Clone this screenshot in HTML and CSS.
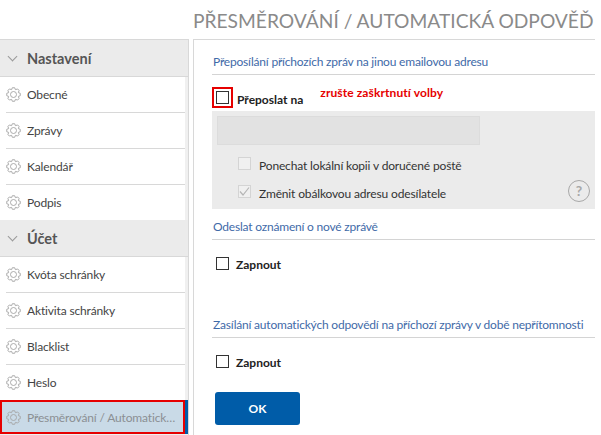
FILE: index.html
```html
<!DOCTYPE html>
<html>
  <head>
    <meta charset="utf-8">
    <link rel="stylesheet" href="styles.css">
  </head>
  <body>
    <svg class="defs" width="0" height="0">
      <symbol id="gear" viewBox="0 0 16 16">
        <path d="M6.7.8h2.6L10 2.8l2.4-.7 1.5 1.5-.7 2.4 2 .7v2.6l-2 .7.7 2.4-1.5 1.5-2.4-.7-.7 2H6.7l-.7-2-2.4.7-1.5-1.5.7-2.4-2-.7V6.7l2-.7-.7-2.4 1.5-1.5 2.4.7z" fill="none" stroke="currentColor" stroke-linejoin="round"/>
        <circle cx="8" cy="8" r="3.2" fill="none" stroke="currentColor"/>
      </symbol>
    </svg>
    <div class="page">
      <h1 class="page-title">PŘESMĚROVÁNÍ / AUTOMATICKÁ ODPOVĚĎ</h1>
      <div class="columns">
        <div class="sidebar">
          <div class="side-head"><span class="chevron"></span>Nastavení</div>
          <ul class="side-list">
            <li><svg class="gear"><use href="#gear"/></svg>Obecné</li>
            <li><svg class="gear"><use href="#gear"/></svg>Zprávy</li>
            <li><svg class="gear"><use href="#gear"/></svg>Kalendář</li>
            <li class="last"><svg class="gear"><use href="#gear"/></svg>Podpis</li>
          </ul>
          <div class="side-head"><span class="chevron"></span>Účet</div>
          <ul class="side-list">
            <li><svg class="gear"><use href="#gear"/></svg>Kvóta schránky</li>
            <li><svg class="gear"><use href="#gear"/></svg>Aktivita schránky</li>
            <li><svg class="gear"><use href="#gear"/></svg>Blacklist</li>
            <li class="last"><svg class="gear"><use href="#gear"/></svg>Heslo</li>
            <li class="active"><svg class="gear"><use href="#gear"/></svg><span class="active-text">Přesměrování / Automatická odpověď</span></li>
          </ul>
        </div>
        <div class="content">
          <h2 class="section first">Přeposílání příchozích zpráv na jinou emailovou adresu</h2>
          <div class="forward-row">
            <span class="mark"><span class="check"></span></span>
            <label class="bold-label">Přeposlat na</label>
            <span class="hint">zrušte zaškrtnutí volby</span>
          </div>
          <div class="panel">
            <div class="fake-input"></div>
            <div class="opt"><span class="check light"></span><span class="opt-text">Ponechat lokální kopii v doručené poště</span></div>
            <div class="opt">
              <span class="check light">
                <svg width="13" height="13" viewBox="0 0 13 13"><path d="M2 6.5l3 3.5 6-7.5" fill="none" stroke="#b5b5b5" stroke-width="1.2"/></svg>
              </span>
              <span class="opt-text">Změnit obálkovou adresu odesílatele</span>
              <span class="help">?</span>
            </div>
          </div>
          <h2 class="section second">Odeslat oznámení o nové zprávě</h2>
          <div class="on-row"><span class="check"></span><label class="bold-label">Zapnout</label></div>
          <h2 class="section third">Zasílání automatických odpovědí na příchozí zprávy v době nepřítomnosti</h2>
          <div class="on-row"><span class="check"></span><label class="bold-label">Zapnout</label></div>
          <button class="ok">OK</button>
        </div>
      </div>
    </div>
  </body>
</html>
```
FILE: styles.css
```css
html, body {
  margin: 0;
  padding: 0;
  height: 100%;
  overflow: hidden;
  background: #fff;
  font-family: Lato, sans-serif;
  font-size: 12px;
  color: #333;
}

.defs {
  display: block;
  height: 0;
}

.page {
  width: 601px;
  height: 435px;
  overflow: hidden;
}

.page-title {
  margin: 0;
  height: 39px;
  padding-top: 8px;
  box-sizing: border-box;
  padding-left: 193px;
  font-size: 19.2px;
  line-height: 26px;
  font-weight: 400;
  color: #8a8a8a;
  white-space: nowrap;
}

.columns {
  display: flex;
  height: 396px;
}

.sidebar {
  width: 189px;
  flex: none;
  box-sizing: border-box;
  border-right: 1px solid #d8d8d8;
  border-top: 1px solid #d8d8d8;
  margin-right: 4px;
  background: #f0f0f0;
}

.side-head {
  height: 36px;
  display: flex;
  align-items: center;
  background: #ebebeb;
  border-bottom: 1px solid #d8d8d8;
  font-size: 14.5px;
  font-weight: 700;
  color: #555;
  padding-left: 8px;
}

.chevron {
  width: 6px;
  height: 6px;
  margin: -3px 11px 0 1px;
  border-right: 1px solid #999;
  border-bottom: 1px solid #999;
  transform: rotate(45deg);
}

.side-list {
  list-style: none;
  margin: 0 3px 0 0;
  padding: 0;
  background: #fff;
}

.side-list li {
  height: 35px;
  margin-left: 6px;
  display: flex;
  align-items: center;
  border-bottom: 1px solid #d8d8d8;
  color: #444;
  font-size: 12px;
  letter-spacing: -0.15px;
}

.side-list li.last {
  border-bottom: none;
}

.gear {
  width: 15px;
  height: 15px;
  margin-right: 6px;
  color: #a5a5a5;
  flex: none;
}

.side-list li.active {
  height: 30px;
  margin: 0 -3px 0 0;
  padding: 2px 0 2px 6px;
  background: #c9dae7;
  box-shadow: inset 0 0 0 2px #e60000;
  border-bottom: none;
  border-right: 3px solid #005ca8;
  color: #8b8f93;
}

.active-text {
  width: 153px;
  overflow: hidden;
  text-overflow: ellipsis;
  white-space: nowrap;
}

.content {
  flex: 1;
  margin-right: 6px;
  border-left: 1px solid #d8d8d8;
  border-top: 1px solid #d8d8d8;
  padding-left: 18px;
  min-width: 0;
}

.section {
  margin: 0;
  padding: 1px 0 4px 1px;
  font-size: 12px;
  font-weight: 400;
  line-height: 16px;
  letter-spacing: -0.2px;
  color: #3f6aa8;
  border-bottom: 1px solid #d4d4d4;
  white-space: nowrap;
}

.section.first {
  padding-top: 14px;
}

.section.second {
  padding-top: 10px;
  padding-bottom: 4px;
}

.section.third {
  margin-top: 29px;
  padding-top: 2px;
}

.forward-row {
  display: flex;
  align-items: flex-start;
  height: 24px;
  padding-top: 12px;
}

.mark {
  padding: 2px;
  border: 2px solid #e60000;
  display: block;
  margin-right: 4px;
}

.check {
  display: block;
  box-sizing: border-box;
  width: 13px;
  height: 13px;
  border: 1px solid #333;
  background: #fff;
  flex: none;
}

.bold-label {
  font-weight: 700;
  font-size: 12px;
  line-height: 16px;
  color: #222;
}

.forward-row .bold-label {
  margin-top: 5px;
}

.on-row .bold-label {
  margin-top: 4px;
}

.hint {
  margin-left: 17px;
  margin-top: -2px;
  font-size: 12px;
  line-height: 16px;
  letter-spacing: 0.1px;
  font-weight: 700;
  color: #e60000;
}

.panel {
  background: #ebebeb;
  height: 98px;
  position: relative;
  padding-left: 5px;
  padding-top: 5px;
  box-sizing: border-box;
}

.fake-input {
  width: 263px;
  height: 29px;
  background: #e2e2e2;
  border: 1px solid #dcdcdc;
  box-sizing: border-box;
  margin-bottom: 4px;
}

.opt {
  display: flex;
  align-items: center;
  height: 28px;
  padding-left: 21px;
  color: #333;
  font-size: 12px;
  letter-spacing: -0.15px;
}

.opt-text {
  margin-top: 4px;
}

.check.light {
  border-color: #d4d4d4;
  background: #f0f0f0;
  margin-right: 8px;
}

.check.light svg {
  display: block;
  margin: -1px;
}

.help {
  position: absolute;
  right: 5px;
  bottom: 7px;
  width: 20px;
  height: 20px;
  border: 1px solid #a8a8a8;
  border-radius: 50%;
  text-align: center;
  line-height: 20px;
  font-size: 14px;
  font-weight: 700;
  color: #a8a8a8;
}

.on-row {
  display: flex;
  align-items: center;
  gap: 7px;
  height: 46px;
  padding-left: 4px;
}

.ok {
  display: block;
  margin: 8px 0 0 3px;
  width: 85px;
  height: 33px;
  background: #005ca8;
  border: none;
  border-radius: 3px;
  color: #fff;
  font-family: Lato, sans-serif;
  font-size: 12px;
  font-weight: 700;
}
```
